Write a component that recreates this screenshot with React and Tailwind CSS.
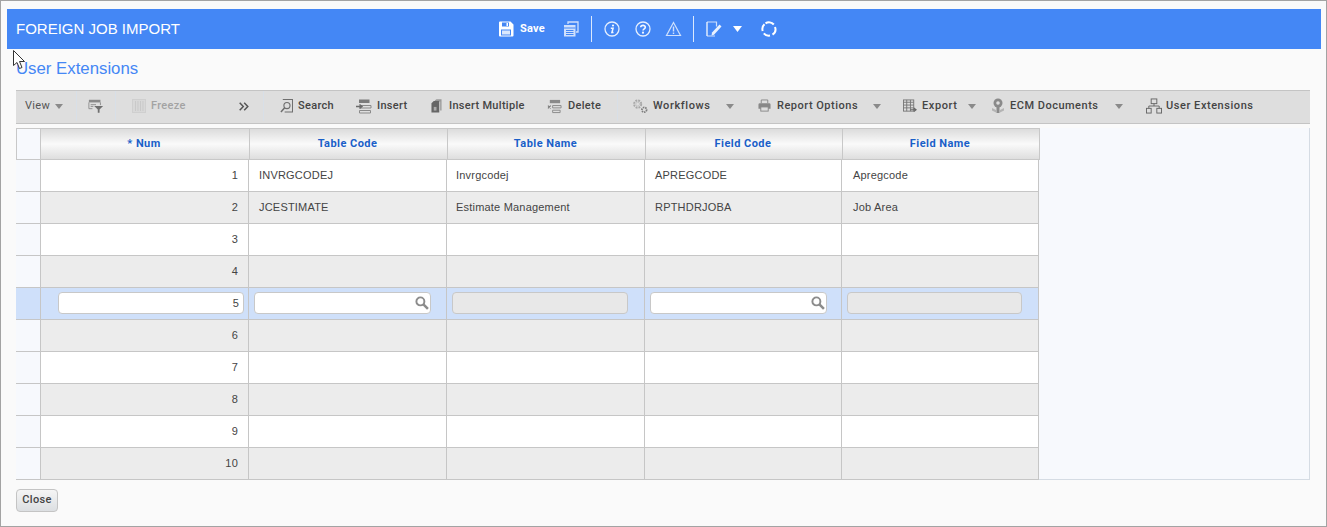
const labelFont = "font-['Roboto','Liberation_Sans',sans-serif]";

function Caret({ className = "", w = 8, h = 5 }) {
  return (
    <svg width={w} height={h} viewBox="0 0 10 6" preserveAspectRatio="none" className={`shrink-0 ${className}`}>
      <path d="M0 0h10L5 6z" fill="currentColor" />
    </svg>
  );
}

const Ico = ({ children, w = 16, h = 16, vw, vh = 16, className = "" }) => (
  <svg width={w} height={h} viewBox={`0 0 ${vw || w} ${vh}`} fill="none" className={`shrink-0 ${className}`}>
    {children}
  </svg>
);

const SaveIcon = () => (
  <Ico>
    <path d="M1 1.500A1 1 0 0 1 2 .5h10.500l3 3V14.500a1 1 0 0 1-1 1H2a1 1 0 0 1-1-1z" fill="#fff" />
    <rect x="4" y="1.500" width="7" height="4" fill="#4487f5" />
    <rect x="8.500" y="2" width="1.500" height="3" fill="#fff" />
    <rect x="3" y="8.500" width="10" height="6" fill="#4487f5" />
    <rect x="4" y="9.500" width="8" height="4" fill="#dbe8fd" />
  </Ico>
);
const CopyIcon = () => (
  <Ico>
    <path d="M5 3V1h10v10h-2" stroke="#cfe0fc" strokeWidth="1.300" />
    <rect x="1" y="4" width="11.500" height="11.500" fill="#cfe0fc" />
    <path d="M1 7h11.500M3 9.500h7.500M3 11.500h7.500M3 13.500h7.500" stroke="#4487f5" />
  </Ico>
);
const InfoIcon = () => (
  <Ico>
    <circle cx="8" cy="8" r="7" stroke="#e4eefe" strokeWidth="1.300" />
    <circle cx="9" cy="4.500" r="1.100" fill="#f2f7ff" />
    <path d="M6.800 7.200h2.300L7.900 11.600H9.500" stroke="#f2f7ff" strokeWidth="1.500" />
  </Ico>
);
const HelpIcon = () => (
  <Ico>
    <circle cx="8" cy="8" r="7" stroke="#e4eefe" strokeWidth="1.300" />
    <path d="M5.700 6.200C5.900 3.800 10.300 3.800 10.300 6.200 10.300 7.800 8 7.800 8 9.600" stroke="#f2f7ff" strokeWidth="1.600" />
    <circle cx="8" cy="11.700" r="1.100" fill="#f2f7ff" />
  </Ico>
);
const WarnIcon = () => (
  <Ico w={17} vw={16}>
    <path d="M8 1.500 15 14.500H1z" stroke="#cfe0fc" strokeWidth="1.200" />
    <path d="M8 5.500v5M8 11.500v1.500" stroke="#cfe0fc" strokeWidth="1.400" />
  </Ico>
);
const NoteIcon = () => (
  <Ico>
    <path d="M1 1h9.500v4.500M9 15H1z" stroke="#cfe0fc" strokeWidth="1.200" />
    <path d="M1 1v14" stroke="#e9f1fe" strokeWidth="1.400" />
    <path d="M6 11.500 13.500 3.500 15.500 5.500 8 13.800 5.500 14.500z" fill="#e9f1fe" />
  </Ico>
);
const RefreshIcon = () => (
  <Ico>
    <path d="M4.500 2.300A6.500 6.500 0 0 1 12.800 3.500M14 6A6.500 6.500 0 0 1 11.500 13.700M9 14.500A6.500 6.500 0 0 1 2.800 12.300M1.700 10A6.500 6.500 0 0 1 3.500 3.300" stroke="#fff" strokeWidth="2" />
  </Ico>
);
const FilterIcon = () => (
  <Ico vw={18}>
    <path d="M1 1h13v3H1z" fill="#8a8a8a" />
    <path d="M1 4v7h4M14 4v3M3 6.500h6M3 8.500h3" stroke="#8a8a8a" />
    <path d="M7 8h10l-4 4v3.500h-2V12z" fill="#6f6f6f" />
  </Ico>
);
const FreezeIcon = () => (
  <Ico w={14}>
    <rect x="0.500" y="1.500" width="13" height="13" stroke="#cfcfcf" fill="#d8d8d8" />
    <path d="M3.500 3v10M6 3v10M8.500 3v10M11 3v10" stroke="#c9c9c9" />
  </Ico>
);
const SearchDocIcon = () => (
  <Ico w={13} vw={14}>
    <path d="M3 1h10.500v13.500H5" stroke="#6f6f6f" strokeWidth="1.200" />
    <circle cx="7.500" cy="7.500" r="3.300" stroke="#6f6f6f" strokeWidth="1.200" />
    <path d="M5 10 1 14.500" stroke="#6f6f6f" strokeWidth="1.600" />
  </Ico>
);
const InsertIcon = () => (
  <Ico>
    <path d="M3 1.500h10.500v3.500H3z" fill="#7a7a7a" />
    <path d="M4 7.500h11v2.500H4zM3.500 12.500h11v2.500h-11z" stroke="#8a8a8a" />
    <path d="M0 8.500h5.500M3.500 6.500 6 8.500 3.500 10.500" stroke="#6a6a6a" strokeWidth="1.400" />
  </Ico>
);
const MultipleIcon = () => (
  <Ico w={11} vw={12}>
    <path d="M4 2 6 .5h5.500V13H10V3H5z" fill="#9a9a9a" />
    <path d="M.5 5 3 2.500h6V15H.5z" fill="#666" />
    <rect x="3" y="9" width="3" height="4" fill="#aaa" />
  </Ico>
);
const DeleteIcon = () => (
  <Ico w={15} vw={16}>
    <path d="M3 1.500h11v3.500H3z" fill="#8a8a8a" />
    <path d="M6 7.500h9v2.500H6zM6 12.500h8v2.500H6z" stroke="#8a8a8a" />
    <path d="M1 7.500 4 10.500M4 7.500 1 10.500" stroke="#777" strokeWidth="1.200" />
  </Ico>
);
const GearsIcon = () => (
  <Ico w={17} vw={18}>
    <circle cx="6" cy="6" r="3.800" stroke="#a8a8a8" strokeWidth="2" strokeDasharray="2 1" />
    <circle cx="6" cy="6" r="2" stroke="#c4c4c4" />
    <circle cx="13" cy="12" r="2.500" stroke="#7d7d7d" strokeWidth="1.800" strokeDasharray="1.500 .8" />
  </Ico>
);
const PrintIcon = () => (
  <Ico w={13} vw={14}>
    <path d="M3.500 5V1.500h7V5" stroke="#888" />
    <path d="M.5 6.500A1.500 1.500 0 0 1 2 5h10a1.500 1.500 0 0 1 1.500 1.500V11h-13z" fill="#888" />
    <rect x="3" y="9" width="8" height="4.500" fill="#dedede" stroke="#888" />
  </Ico>
);
const ExportIcon = () => (
  <Ico w={14} vw={15}>
    <rect x="0.500" y="1.500" width="11" height="12" stroke="#777" />
    <path d="M.5 4h11M4 1.500v12M8 1.500v12M.5 7h11M.5 10h11" stroke="#777" />
    <path d="M8 12h5M11.500 10l2.500 2-2.500 2" stroke="#666" strokeWidth="1.300" />
  </Ico>
);
const EcmIcon = () => (
  <Ico w={14}>
    <circle cx="7" cy="5" r="4.500" fill="#8a8a8a" />
    <circle cx="7" cy="5" r="1.800" fill="#dedede" />
    <path d="M5.500 9h3v6h-3z" fill="#8a8a8a" />
    <path d="M1 10 5 12v2.500L1 12.500zM13 10 9 12v2.500l4-2z" fill="#b4b4b4" />
  </Ico>
);
const TreeIcon = () => (
  <Ico w={16} vw={17}>
    <rect x="5.500" y="0.500" width="6" height="5" stroke="#666" />
    <rect x="0.500" y="10.500" width="5" height="5" stroke="#666" />
    <rect x="11.500" y="10.500" width="5" height="5" stroke="#666" />
    <path d="M8.500 5.500v2.500M3 10.500V8h11v2.500" stroke="#666" />
  </Ico>
);
const LensIcon = () => (
  <Ico w={14} h={14} vw={13} vh={13}>
    <circle cx="5" cy="5" r="3.700" stroke="#8c8c8c" strokeWidth="1.800" />
    <path d="M7.800 7.800 12 12" stroke="#8c8c8c" strokeWidth="2.400" />
  </Ico>
);

const Sep = ({ className = "" }) => <div className={`h-[30px] w-px bg-[#d8dfe7] ${className}`} />;

function Tool({ icon, label, ml, gap, w, muted }) {
  return (
    <div className={`flex items-center ${gap} ${ml}`}>
      {icon}
      <span className={`whitespace-nowrap ${w} ${muted ? "text-[#a3a3a3]" : "text-[#444]"}`}>{label}</span>
    </div>
  );
}

const headCols = "grid grid-cols-[25px_209px_198px_198px_197px_197px]";
const bodyCols = "grid grid-cols-[25px_208px_198px_198px_197px_197px]";
const headers = ["* Num", "Table Code", "Table Name", "Field Code", "Field Name"];
const rows = [
  ["1", "INVRGCODEJ", "Invrgcodej", "APREGCODE", "Apregcode"],
  ["2", "JCESTIMATE", "Estimate Management", "RPTHDRJOBA", "Job Area"],
  ["3", "", "", "", ""],
  ["4", "", "", "", ""],
  ["5", "", "", "", ""],
  ["6", "", "", "", ""],
  ["7", "", "", "", ""],
  ["8", "", "", "", ""],
  ["9", "", "", "", ""],
  ["10", "", "", "", ""],
];

const cellLine = "border-r border-b border-[#c6c6c6]";
const textPad = ["pl-[10px]", "pl-[9px]", "pl-[10px]", "pl-[11px]"];

function EditRow() {
  return (
    <div className={`${bodyCols} h-8 bg-[#cfe0fa]`}>
      <div className={cellLine} />
      <div className={`${cellLine} pl-[17px] pr-[4px] pt-1`}>
        <div className="flex h-[22px] items-center justify-end rounded-[4px] border border-[#c8c8c8] bg-white pr-[4px] text-[#444]">5</div>
      </div>
      <div className={`${cellLine} pl-[5px] pr-[15px] pt-1`}>
        <div className="flex h-[22px] items-center justify-end rounded-[4px] border border-[#c8c8c8] bg-white pr-px"><LensIcon /></div>
      </div>
      <div className={`${cellLine} pl-[5px] pr-[16px] pt-1`}>
        <div className="h-[22px] rounded-[4px] border border-[#c8c8c8] bg-[#e8e8e8]" />
      </div>
      <div className={`${cellLine} pl-[5px] pr-[14px] pt-1`}>
        <div className="flex h-[22px] items-center justify-end rounded-[4px] border border-[#c8c8c8] bg-white pr-px"><LensIcon /></div>
      </div>
      <div className={`${cellLine} pl-[5px] pr-[16px] pt-1`}>
        <div className="h-[22px] rounded-[4px] border border-[#c8c8c8] bg-[#e8e8e8]" />
      </div>
    </div>
  );
}

export default function App() {
  return (
    <div className="relative h-[527px] w-[1327px] overflow-hidden border border-[#a3a3a3] bg-[#fafafa] pl-[6px] pr-[5px] pt-[8px] font-['Liberation_Sans',sans-serif]">
      {/* title bar */}
      <div className="relative flex h-10 items-center bg-[#4487f5] pl-[9px] text-[15px] text-white">
        <span>FOREIGN JOB IMPORT</span>
        <div className="absolute left-[491px] top-0 flex h-10 items-center">
          <SaveIcon />
          <span className={`ml-[6px] w-[25px] whitespace-nowrap text-[11px] font-bold tracking-[0.2px] ${labelFont}`}>Save</span>
          <div className="ml-[18px]"><CopyIcon /></div>
          <div className="ml-[12px] h-[26px] w-px bg-[#dbe8fd]" />
          <div className="ml-[12px]"><InfoIcon /></div>
          <div className="ml-[15px]"><HelpIcon /></div>
          <div className="ml-[14px]"><WarnIcon /></div>
          <div className="ml-[11px] h-[26px] w-px bg-[#dbe8fd]" />
          <div className="ml-[12px]"><NoteIcon /></div>
          <Caret className="ml-[11px] text-white" w={9} h={6} />
          <div className="ml-[19px]"><RefreshIcon /></div>
        </div>
      </div>

      <div className="ml-[9px] mr-[11px]">
        <h1 className="mt-[10px] h-[20px] text-[16.800px] font-normal leading-[20px] text-[#4487f5]">User Extensions</h1>

        {/* toolbar */}
        <div className={`mt-[11px] flex h-[34px] items-center border-y border-[#c4c4c4] bg-[#dedede] pb-[2px] pl-[9px] text-[11px] font-medium tracking-[0.3px] ${labelFont}`}>
          <span className="w-[24px] font-normal text-[#555]">View</span>
          <Caret className="ml-[6px] text-[#8a8a8a]" />
          <Sep className="ml-[13px]" />
          <div className="ml-[11px]"><FilterIcon /></div>
          <Sep className="ml-[11px]" />
          <Tool icon={<FreezeIcon />} label="Freeze" ml="ml-[16px]" gap="gap-[5px]" w="w-[35px]" muted />
          <svg width="10" height="9" viewBox="0 0 10 9" fill="none" className="ml-[53px] shrink-0">
            <path d="M.7.700 4.300 4.500.7 8.300M5.200.700 8.800 4.500 5.200 8.300" stroke="#555" strokeWidth="1.500" />
          </svg>
          <Sep className="ml-[14px]" />
          <Tool icon={<SearchDocIcon />} label="Search" ml="ml-[16px]" gap="gap-[5px]" w="w-[37px]" />
          <Tool icon={<InsertIcon />} label="Insert" ml="ml-[21px]" gap="gap-[5px]" w="w-[31px]" />
          <Tool icon={<MultipleIcon />} label="Insert Multiple" ml="ml-[23px]" gap="gap-[7px]" w="w-[75px]" />
          <Tool icon={<DeleteIcon />} label="Delete" ml="ml-[23px]" gap="gap-[6px]" w="w-[33px]" />
          <Sep className="ml-[16px]" />
          <Tool icon={<GearsIcon />} label="Workflows" ml="ml-[14px]" gap="gap-[4px]" w="w-[57px] tracking-[0.600px]" />
          <Caret className="ml-[16px] text-[#8a8a8a]" />
          <Tool icon={<PrintIcon />} label="Report Options" ml="ml-[24px]" gap="gap-[6px]" w="w-[81px] tracking-[0.500px]" />
          <Caret className="ml-[15px] text-[#8a8a8a]" />
          <Tool icon={<ExportIcon />} label="Export" ml="ml-[22px]" gap="gap-[5px]" w="w-[35px] tracking-[0.600px]" />
          <Caret className="ml-[11px] text-[#8a8a8a]" />
          <Tool icon={<EcmIcon />} label="ECM Documents" ml="ml-[15px]" gap="gap-[5px]" w="w-[88px] tracking-[0.500px]" />
          <Caret className="ml-[17px] text-[#8a8a8a]" />
          <Tool icon={<TreeIcon />} label="User Extensions" ml="ml-[23px]" gap="gap-[4px]" w="w-[87px] tracking-[0.550px]" />
        </div>

        {/* grid */}
        <div className="mt-[4px] h-[352px] w-[1294px] border-r border-b border-[#d5dce4] bg-[#f7f9fd] text-[11px] tracking-[0.2px] text-[#444]">
          <div className={`${headCols} h-8 w-[1024px]`}>
            <div className="border border-[#c8c8c8] bg-[#f7f9fd]" />
            {headers.map((h) => (
              <div
                key={h}
                className={`flex items-center justify-center border-y border-r border-[#c8c8c8] bg-linear-to-b from-[#dcdcdc] via-[#fafafa] to-[#dedede] pr-[2px] font-bold tracking-[0.450px] text-[#1a5fc8] ${labelFont}`}
              >
                {h}
              </div>
            ))}
          </div>
          <div className="w-[1023px]">
            {rows.map((r, i) =>
              i === 4 ? (
                <EditRow key={i} />
              ) : (
                <div key={i} className={`${bodyCols} h-8 ${i % 2 ? "bg-[#ececec]" : "bg-white"}`}>
                  <div className={`${cellLine} bg-[#f7f9fd]`} />
                  <div className={`flex items-center justify-end pr-[10px] ${cellLine}`}>{r[0]}</div>
                  {r.slice(1).map((c, j) => (
                    <div key={j} className={`flex items-center ${textPad[j]} ${cellLine}`}>{c}</div>
                  ))}
                </div>
              )
            )}
          </div>
        </div>

        <button className={`mt-[9px] h-[23px] w-[42px] rounded-[4px] border border-[#c4c4c4] bg-linear-to-b from-[#f5f5f5] to-[#dcdfe2] text-[11px] font-medium tracking-[0.3px] text-[#444] ${labelFont}`}>
          Close
        </button>
      </div>

      {/* mouse pointer */}
      <svg width="13" height="20" viewBox="0 0 13 20" className="absolute left-[12px] top-[49px]">
        <path d="M.5.500v15l3.500-3 2.500 6 2.500-1-2.500-6h5z" fill="#fff" stroke="#333" />
      </svg>
    </div>
  );
}
